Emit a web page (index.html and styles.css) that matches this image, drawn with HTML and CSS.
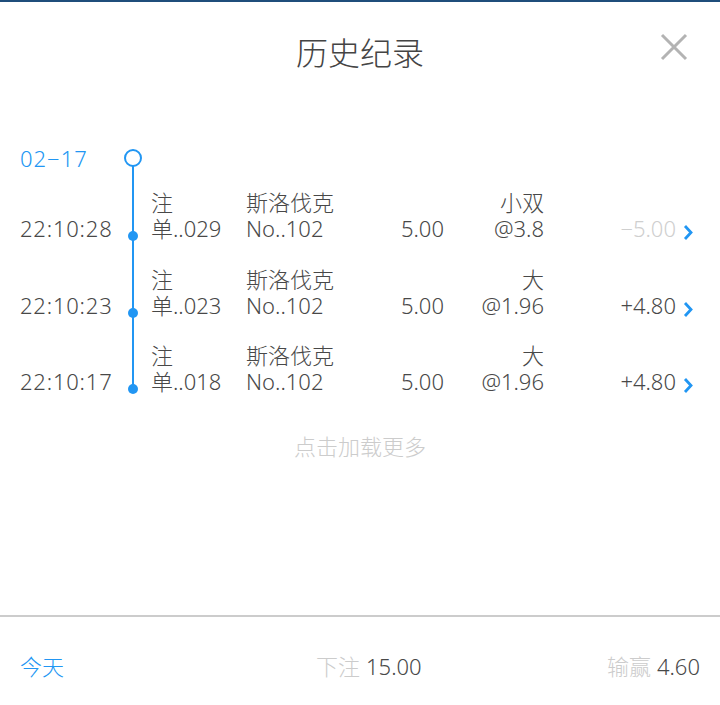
FILE: index.html
```html
<!DOCTYPE html>
<html lang="zh-CN">
<head>
  <meta charset="UTF-8" />
  <meta name="viewport" content="width=device-width, initial-scale=1.0" />
  <title>历史纪录</title>
  <link rel="stylesheet" href="styles.css">
</head>
<body>
  <div class="page">
    <div class="topbar"></div>

    <div class="header">
      <h1 class="title">历史纪录</h1>
      <button class="close-btn" aria-label="关闭">
        <svg width="28" height="28" viewBox="0 0 28 28">
          <path d="M2 2 L26 26 M26 2 L2 26" stroke="#b3b3b3" stroke-width="3" fill="none" />
        </svg>
      </button>
    </div>

    <div class="timeline">
      <div class="date-row">
        <div class="date">02−17</div>
        <div class="axis"><span class="circle"></span></div>
      </div>

      <div class="record">
        <div class="time">22:10:28</div>
        <div class="axis"><span class="dot"></span></div>
        <div class="order"><span>注</span><span>单..029</span></div>
        <div class="game"><span>斯洛伐克</span><span>No..102</span></div>
        <div class="stake">5.00</div>
        <div class="pick"><span>小双</span><span>@3.8</span></div>
        <div class="result lose">−5.00</div>
        <div class="more">
          <svg width="10" height="17" viewBox="0 0 10 17"><path d="M2 2 L8 8.5 L2 15" stroke="#2196f3" stroke-width="2.8" fill="none" /></svg>
        </div>
      </div>

      <div class="record">
        <div class="time">22:10:23</div>
        <div class="axis"><span class="dot"></span></div>
        <div class="order"><span>注</span><span>单..023</span></div>
        <div class="game"><span>斯洛伐克</span><span>No..102</span></div>
        <div class="stake">5.00</div>
        <div class="pick"><span>大</span><span>@1.96</span></div>
        <div class="result">+4.80</div>
        <div class="more">
          <svg width="10" height="17" viewBox="0 0 10 17"><path d="M2 2 L8 8.5 L2 15" stroke="#2196f3" stroke-width="2.8" fill="none" /></svg>
        </div>
      </div>

      <div class="record">
        <div class="time">22:10:17</div>
        <div class="axis"><span class="dot"></span></div>
        <div class="order"><span>注</span><span>单..018</span></div>
        <div class="game"><span>斯洛伐克</span><span>No..102</span></div>
        <div class="stake">5.00</div>
        <div class="pick"><span>大</span><span>@1.96</span></div>
        <div class="result">+4.80</div>
        <div class="more">
          <svg width="10" height="17" viewBox="0 0 10 17"><path d="M2 2 L8 8.5 L2 15" stroke="#2196f3" stroke-width="2.8" fill="none" /></svg>
        </div>
      </div>
    </div>

    <div class="load-more">点击加载更多</div>

    <div class="footer">
      <div class="today">今天</div>
      <div class="sum"><span class="label">下注</span>15.00</div>
      <div class="sum"><span class="label">输赢</span>4.60</div>
    </div>
  </div>
</body>
</html>
```

FILE: styles.css
```css
body {
  margin: 0;
  font-family: "Noto Sans", "Noto Sans CJK SC", sans-serif;
  font-weight: 300;
  color: #484848;
  background: #fff;
}
.page {
  height: 705px;
  display: flex;
  flex-direction: column;
  overflow: hidden;
}
.topbar {
  height: 2px;
  background: #1f4d7b;
}
.header {
  position: relative;
  height: 102px;
}
.title {
  margin: 0;
  font-size: 32px;
  font-weight: 300;
  line-height: 102px;
  text-align: center;
  color: #444;
}
.close-btn {
  position: absolute;
  top: 31px;
  right: 32px;
  padding: 0;
  border: none;
  background: none;
  display: block;
}
.close-btn svg {
  display: block;
}

/* timeline list */
.timeline {
  position: relative;
  margin-top: 45px;
  padding-left: 20px;
  font-size: 22px;
}
.timeline::before {
  content: "";
  position: absolute;
  left: 132px;
  width: 2px;
  top: 9px;
  bottom: 5px;
  background: #2196f3;
}
.date-row,
.record {
  display: grid;
  grid-template-columns: 104px 18px 104px 110px 88px 100px 132px 24px;
}
.date-row {
  height: 18px;
  line-height: 18px;
}
.date {
  color: #2196f3;
  letter-spacing: 1px;
}
.axis {
  position: relative;
  display: flex;
  justify-content: center;
}
.circle {
  position: relative;
  z-index: 1;
  width: 14px;
  height: 14px;
  border: 2px solid #2196f3;
  border-radius: 50%;
  background: #fff;
}
.record {
  padding-top: 24.5px;
  line-height: 26px;
}
.date-row + .record {
  padding-top: 22px;
}
.record .axis {
  align-items: flex-end;
}
.dot {
  width: 10px;
  height: 10px;
  border-radius: 50%;
  background: #2196f3;
}
.order,
.game,
.pick {
  display: flex;
  flex-direction: column;
}
.order {
  padding-left: 9px;
}
.pick {
  align-items: flex-end;
}
.time,
.stake,
.result,
.more {
  align-self: end;
}
.time {
  letter-spacing: 0.8px;
}
.stake,
.result {
  text-align: right;
}
.result.lose {
  color: #cfcfcf;
}
.more {
  padding-left: 7px;
}
.more svg {
  display: block;
}

.load-more {
  margin-top: 39px;
  text-align: center;
  font-size: 22px;
  line-height: 26px;
  color: #cccccc;
}

.footer {
  margin-top: auto;
  border-top: 2px solid #cccccc;
  padding: 36px 20px 26px;
  display: grid;
  grid-template-columns: 296px 1fr auto;
  font-size: 22px;
  line-height: 26px;
}
.today {
  color: #2196f3;
}
.label {
  color: #cccccc;
  margin-right: 6px;
}
```
